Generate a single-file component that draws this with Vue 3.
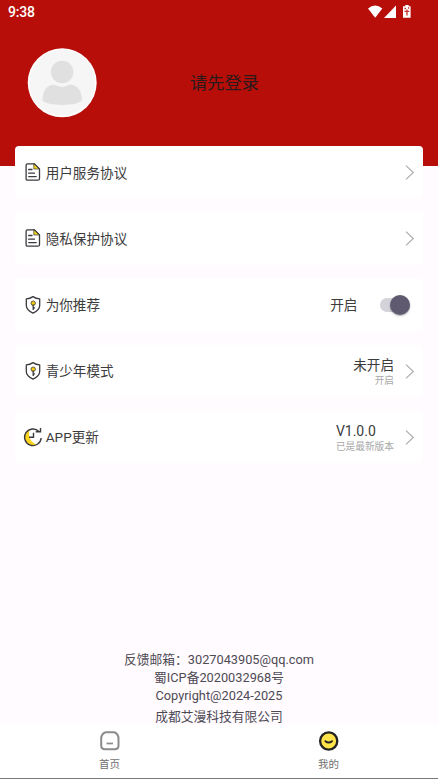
<script setup>
const rows = [
  { icon: 'doc', title: '用户服务协议' },
  { icon: 'doc', title: '隐私保护协议' },
  { icon: 'shield', title: '为你推荐', state: '开启', toggle: true },
  { icon: 'shield', title: '青少年模式', value: '未开启', note: '开启' },
  { icon: 'update', title: 'APP更新', value: 'V1.0.0', note: '已是最新版本', left: true },
]
</script>

<template>
  <div class="page">
    <header class="header">
      <div class="status">
        <span class="time">9:38</span>
        <svg class="signals" width="46" height="14" viewBox="0 0 46 14" fill="#fff">
          <path d="M0 3.600Q7.200-2.400 14.300 3.600L7.200 12.800Z" />
          <path d="M28 .5V13H16Z" />
          <path d="M36.500 1.200H37.300V0H40.700V1.200H42.600V12.800H35V1.200Z" />
          <path d="M36.500 3.500H38M40 3H41.200M36.500 6.300H41.300M39 4.500V10.500" stroke="#c5322e" stroke-width="1.300" />
        </svg>
      </div>
      <div class="profile">
        <svg class="avatar" width="70" height="70" viewBox="0 0 70 70">
          <circle cx="35.200" cy="34.800" r="34.500" fill="#fff" />
          <circle cx="35.200" cy="34.800" r="33" fill="#f6f6f6" />
          <circle cx="35.200" cy="24" r="11.200" fill="#e0e0e0" />
          <path d="M15.500 52C15.500 43 20 37 26 36.800C29 36.800 31 39 35 39C39 39 41 36.800 44 36.800C50 37 55 43 55 52C52 58.500 18.500 58.500 15.500 52Z" fill="#e0e0e0" />
        </svg>
        <span class="login">请先登录</span>
      </div>
    </header>

    <main class="list">
      <section v-for="row in rows" :key="row.title" class="card">
        <svg v-if="row.icon === 'doc'" class="icon" width="20" height="20" viewBox="0 0 20 20" fill="none" stroke="#3b3b3f" stroke-width="1.300" stroke-linejoin="round" stroke-linecap="round">
          <path d="M10.800 1.800V7H16.600L11.500 1.800Z" fill="#f4d51c" stroke-width=".7" />
          <path d="M4.400 1.900H11.500L16.500 6.900V16.700Q16.500 18.200 15 18.200H4.600Q3.100 18.200 3.100 16.700V3.300Q3.100 1.900 4.400 1.900Z" />
          <path d="M5.700 7.500H9M5.700 11.200H11.500M5.700 14.600H13.200" />
        </svg>
        <svg v-else-if="row.icon === 'shield'" class="icon" width="20" height="20" viewBox="0 0 20 20" fill="none" stroke="#3b3b3f" stroke-width="1.300" stroke-linejoin="round">
          <path d="M10 1.600Q13 3.700 16.700 3.900V10.500Q16.700 14.800 10 18.200Q3.300 14.800 3.300 10.500V3.900Q7 3.700 10 1.600Z" />
          <circle cx="10.200" cy="8.200" r="2.200" fill="#f8cc08" stroke-width=".8" />
          <path d="M10.200 9.500V15M10.200 12.800H12" stroke-width="1.300" />
        </svg>
        <svg v-else class="icon" width="20" height="20" viewBox="0 0 20 20" fill="none">
          <path d="M5.500 3.200C1 6 0 12.800 4.500 16.300Q9 20 14 17.400C8.500 16 4.500 10.500 6.500 2.700Z" fill="#fbd51d" />
          <path d="M16 4.600A8.300 8.300 0 1 0 18.200 11" stroke="#3b3b3f" stroke-width="1.400" />
          <path d="M12.700 4.800H17.500V1M10.500 5.800V10.300H6" stroke="#3b3b3f" stroke-width="1.400" />
        </svg>
        <span class="title">{{ row.title }}</span>
        <template v-if="row.toggle">
          <span class="state">{{ row.state }}</span>
          <span class="switch"><span class="knob"></span></span>
        </template>
        <template v-else>
          <span v-if="row.value" class="detail" :class="{ left: row.left }">
            <span class="value">{{ row.value }}</span>
            <span class="note">{{ row.note }}</span>
          </span>
          <svg class="arrow" width="10" height="16" viewBox="0 0 10 16" fill="none" stroke="#aaa" stroke-width="1.100">
            <path d="M1 1.700L8.300 8.500L1 15.300" />
          </svg>
        </template>
      </section>
    </main>

    <footer class="legal">
      <span>反馈邮箱：3027043905@qq.com</span>
      <span>蜀ICP备2020032968号</span>
      <span>Copyright@2024-2025</span>
      <span class="company">成都艾漫科技有限公司</span>
    </footer>

    <nav class="tabs">
      <div class="tab">
        <svg width="22" height="22" viewBox="0 0 22 22" fill="none" stroke="#8b8b8b">
          <path d="M7.200 2.200H14.800Q16.500 2.200 18 4.200Q19.500 6.200 19.500 8V15.500Q19.500 19.300 15.700 19.300H6Q2.200 19.300 2.200 15.500V8Q2.200 6.200 3.700 4.200Q5.200 2.200 7.200 2.200Z" stroke-width="2" />
          <path d="M7.500 13.500H14" stroke-width="1.700" />
        </svg>
        <span>首页</span>
      </div>
      <div class="tab">
        <svg width="22" height="22" viewBox="0 0 22 22" fill="none" stroke="#222">
          <circle cx="10.700" cy="11" r="8.600" fill="#ffe34a" stroke-width="2.300" />
          <path d="M7.400 11.200Q10.700 13.800 14 11.200" stroke-width="1.900" stroke-linecap="round" />
        </svg>
        <span>我的</span>
      </div>
    </nav>
  </div>
</template>

<style>
body {
  margin: 0;
}
</style>

<style scoped>
.page {
  display: flex;
  flex-direction: column;
  box-sizing: border-box;
  height: 779px;
  overflow: hidden;
  background: #fffbff;
  font-family: Roboto, "Noto Sans CJK SC", sans-serif;
  color: #3c3c3c;
}
.header {
  flex: none;
  height: 165.500px;
  background: #b80e0a;
}
.status {
  display: flex;
  justify-content: space-between;
  height: 24px;
  padding: 0 24px 0 8px;
  color: #fff;
}
.time {
  font-size: 14px;
  font-weight: 500;
  line-height: 25px;
  letter-spacing: -0.200px;
}
.signals {
  margin-top: 5px;
}
.profile {
  display: flex;
  align-items: center;
  padding: 24px 0 0 27px;
}
.avatar {
  flex: none;
}
.login {
  margin-left: 93px;
  font-size: 17.300px;
  line-height: 24px;
  color: #2a1a1a;
}
.list {
  display: flex;
  flex-direction: column;
  gap: 13.800px;
  margin: -19.500px 15px 0;
}
.card {
  display: flex;
  align-items: center;
  box-sizing: border-box;
  height: 52.400px;
  padding: 0 8px;
  border-radius: 4px;
  background: #fff;
}
.icon {
  flex: none;
}
.title {
  flex: 1;
  margin: 1px 0 0 2.700px;
  font-size: 13.600px;
  line-height: 20px;
}
.state {
  margin: 1px 23px 0 0;
  font-size: 13.600px;
  line-height: 20px;
}
.switch {
  display: flex;
  align-items: center;
  justify-content: flex-end;
  width: 30px;
  height: 14px;
  margin-right: 4.700px;
  border-radius: 7px;
  background: #d5d3da;
}
.knob {
  flex: none;
  width: 20px;
  height: 20px;
  border-radius: 50%;
  background: #605a70;
  box-shadow: 0 1px 2px #0005;
}
.detail {
  display: flex;
  flex-direction: column;
  align-items: flex-end;
  margin: 4px 11px 0 0;
}
.detail.left {
  align-items: flex-start;
}
.value {
  font-size: 13.600px;
  line-height: 16px;
}
.detail.left .value {
  font-size: 14px;
}
.note {
  font-size: 9.700px;
  line-height: 16px;
  color: #a8a8a8;
}
.arrow {
  flex: none;
}
.legal {
  display: flex;
  flex-direction: column;
  align-items: center;
  margin: auto 0 -1px;
  font-size: 12.780px;
  line-height: 17.700px;
  color: #4e4a54;
}
.company {
  margin-top: 4px;
}
.tabs {
  display: flex;
  flex: none;
  box-sizing: border-box;
  height: 54px;
  border-bottom: 1px solid #777;
  background: #fff;
}
.tab {
  display: flex;
  flex: 1;
  flex-direction: column;
  align-items: center;
  padding-top: 5px;
  font-size: 10.500px;
  line-height: 14px;
  color: #707070;
}
.tab span {
  margin-top: 6px;
}
</style>
